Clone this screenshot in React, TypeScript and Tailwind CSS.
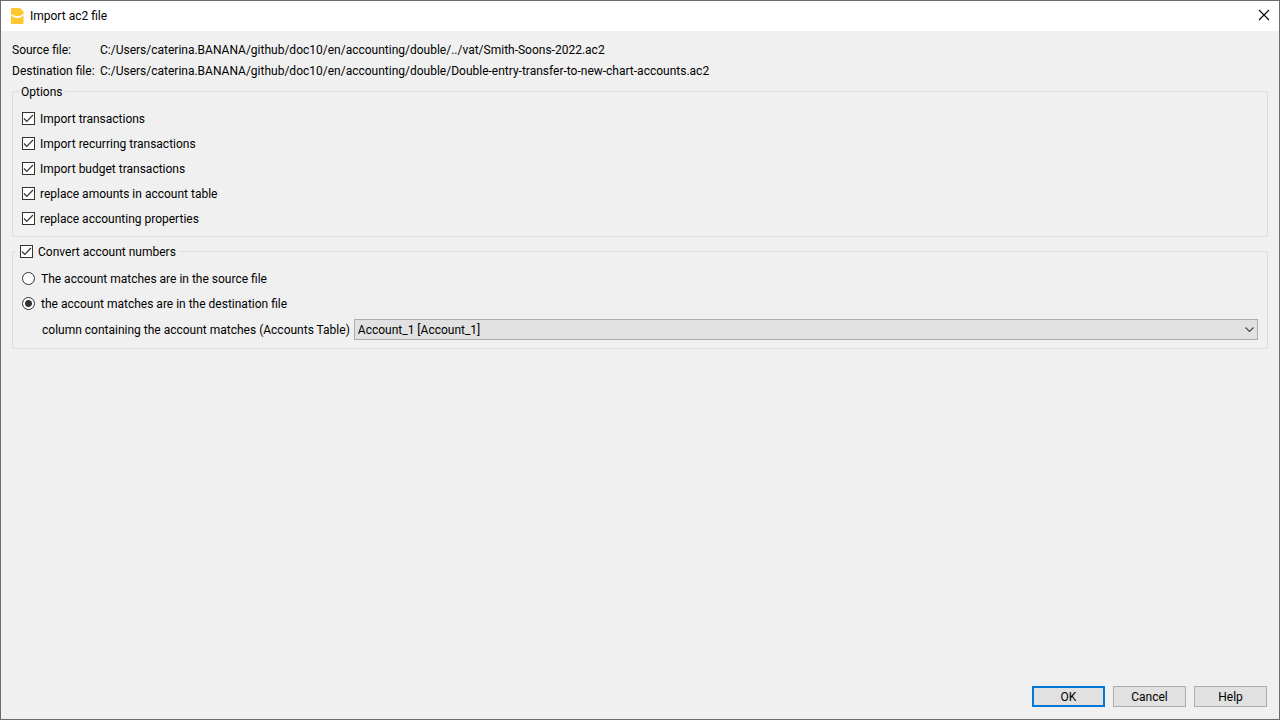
import { ReactNode, useState } from 'react';

const OPTIONS = [
  'Import transactions',
  'Import recurring transactions',
  'Import budget transactions',
  'replace amounts in account table',
  'replace accounting properties',
];

const MATCHES = [
  { value: 'source', label: 'The account matches are in the source file' },
  { value: 'destination', label: 'the account matches are in the destination file' },
];

const BUTTON = 'w-[73px] h-[21px] flex items-center justify-center bg-[#e1e1e1]';

export default function App() {
  const [match, setMatch] = useState('destination');

  return (
    <div className="min-h-screen flex flex-col border border-[#6b6b6b] bg-[#f0f0f0] text-black text-xs font-['Roboto','Noto_Sans',sans-serif]">
      {/* Title bar */}
      <header className="h-[30px] flex items-center justify-between bg-white px-[9px]">
        <div className="flex items-center gap-1.5">
          <AppIcon />
          <h1>Import ac2 file</h1>
        </div>
        <button type="button" aria-label="Close" className="pb-0.5">
          <svg width="12" height="12" viewBox="0 0 12 12" stroke="#000" strokeWidth="1.1" fill="none">
            <path d="M1 1L11 11M11 1L1 11" />
          </svg>
        </button>
      </header>

      <main className="flex-1 px-[11px] pt-2">
        <dl>
          <FileRow label="Source file:" path="C:/Users/caterina.BANANA/github/doc10/en/accounting/double/../vat/Smith-Soons-2022.ac2" />
          <FileRow label="Destination file:" path="C:/Users/caterina.BANANA/github/doc10/en/accounting/double/Double-entry-transfer-to-new-chart-accounts.ac2" />
        </dl>

        <fieldset className="border border-[#dcdcdc] mb-1">
          <legend className="h-[21px] flex items-center ml-1.5 px-0.5">Options</legend>
          <div className="px-[9px] pt-1 pb-[5px]">
            {OPTIONS.map(label => (
              <div key={label} className="h-[25px] flex items-center">
                <CheckOption>{label}</CheckOption>
              </div>
            ))}
          </div>
        </fieldset>

        <fieldset className="border border-[#dcdcdc]">
          <legend className="h-[21px] flex items-center ml-[3px] px-1">
            <CheckOption>Convert account numbers</CheckOption>
          </legend>
          <div className="px-[9px] pt-1 pb-2">
            {MATCHES.map(({ value, label }) => (
              <div key={value} className="h-[25px] flex items-center">
                <label className="flex items-center gap-1.5">
                  <input
                    type="radio"
                    name="match"
                    value={value}
                    checked={match === value}
                    onChange={() => setMatch(value)}
                    className="appearance-none size-[13px] rounded-full border border-[#333] bg-white checked:bg-[radial-gradient(circle,#333_3px,#fff_4px)]"
                  />
                  {label}
                </label>
              </div>
            ))}
            <div className="flex items-center gap-1 mt-[3px] pl-5">
              <label htmlFor="column" className="whitespace-nowrap">
                column containing the account matches (Accounts Table)
              </label>
              <div className="relative flex-1">
                <select id="column" className="block appearance-none w-full h-[21px] border border-[#adadad] bg-[#e1e1e1] pl-[3px] pr-5">
                  <option>Account_1 [Account_1]</option>
                </select>
                <svg
                  className="absolute right-1 top-1.5 pointer-events-none"
                  width="9" height="9" viewBox="0 0 9 9" stroke="#444" strokeWidth="1.1" fill="none"
                >
                  <path d="M.5 2.5L4.5 6.5L8.5 2.5" />
                </svg>
              </div>
            </div>
          </div>
        </fieldset>
      </main>

      <footer className="flex justify-end gap-2 px-3 pb-3">
        <button type="button" className={`${BUTTON} border-2 border-[#0078d7]`}>OK</button>
        <button type="button" className={`${BUTTON} border border-[#adadad]`}>Cancel</button>
        <button type="button" className={`${BUTTON} border border-[#adadad]`}>Help</button>
      </footer>
    </div>
  );
}

function FileRow({ label, path }: { label: string; path: string }) {
  return (
    <div className="h-[21px] flex items-center">
      <dt className="w-[88px] whitespace-nowrap">{label}</dt>
      <dd className="whitespace-nowrap">{path}</dd>
    </div>
  );
}

function CheckOption({ children }: { children: ReactNode }) {
  return (
    <label className="flex items-center gap-[5px]">
      <span className="relative">
        <input
          type="checkbox"
          defaultChecked
          className="peer block appearance-none size-[13px] border border-[#333] bg-white"
        />
        <svg
          className="absolute inset-0 pointer-events-none invisible peer-checked:visible"
          width="13" height="13" viewBox="0 0 13 13" stroke="#333" strokeWidth="1.2" fill="none"
        >
          <path d="M2 6.5L4.8 9.3L11 3" />
        </svg>
      </span>
      {children}
    </label>
  );
}

function AppIcon() {
  return (
    <svg width="14" height="16" viewBox="0 0 14 16" aria-hidden="true">
      <path d="M2 0H10L13.500 3.500V6C10.500 8.800 4.500 8.800 1 6V1Q1 0 2 0Z" fill="#fdc82f" />
      <path d="M1 7.300C4.500 11 10.500 11 13.500 7.300V15Q13.500 16 12.500 16H2Q1 16 1 15Z" fill="#fdc82f" />
    </svg>
  );
}
